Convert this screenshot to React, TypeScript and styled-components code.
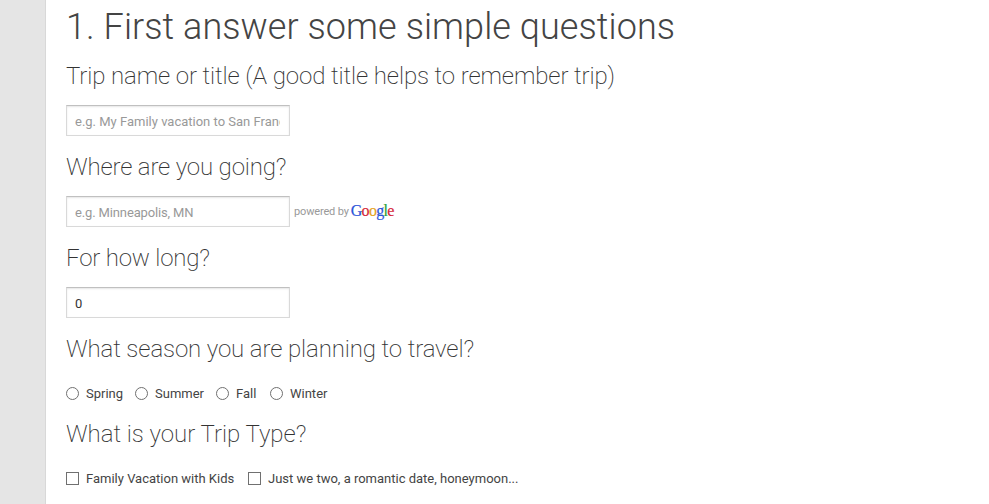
import React from "react";
import styled, { createGlobalStyle } from "styled-components";

const Global = createGlobalStyle`
  * { box-sizing: border-box; }
  body { margin: 0; background: #e5e5e5; overflow: hidden; font-family: Roboto, sans-serif; }
`;
const Page = styled.main`
  margin-left: 45px;
  height: 504px;
  padding: 4px 0 0 20px;
  background: #fff;
  border-left: 1px solid #d8d8d8;
  color: #444;
  overflow: hidden;
`;
const Title = styled.h1`
  margin: 0;
  height: 45px;
  font: 300 36px/46px Roboto, sans-serif;
  letter-spacing: 0.07px;
  white-space: nowrap;
`;
const Question = styled.section<{ $height: number }>`
  height: ${(p) => p.$height}px;
`;
const Heading = styled.h2<{ $tracking?: number }>`
  margin: 0;
  height: 56px;
  padding-top: 12px;
  font: 200 24px/30px Roboto, sans-serif;
  letter-spacing: ${(p) => p.$tracking ?? -0.12}px;
  color: #333;
  white-space: nowrap;
`;
const Row = styled.div`
  display: flex;
  align-items: center;
`;
const Field = styled.input<{ $tracking?: number }>`
  display: block;
  width: 224px;
  height: 31px;
  padding: 2px 8px 0;
  border: 1px solid #d9d9d9;
  border-top-color: #c0c0c0;
  box-shadow: inset 0 1px 2px rgba(0, 0, 0, 0.1);
  font: 13px Roboto, sans-serif;
  letter-spacing: ${(p) => p.$tracking ?? 0}px;
  color: #333;
  outline: 0;
  &::placeholder { color: #999; }
`;
const LongField = styled(Field)`
  padding-right: 9px;
`;
const Powered = styled.span`
  margin-left: 4px;
  font: 11px Roboto, sans-serif;
  letter-spacing: -0.15px;
  color: #999;
`;
const Wordmark = styled.span`
  margin: -2px 0 0 2px;
  font: 16px/20px "Liberation Serif", serif;
  letter-spacing: -0.72px;
`;
const Letter = styled.span<{ $color: string }>`
  display: inline-block;
  color: ${(p) => p.$color};
  -webkit-text-stroke: 0.2px ${(p) => p.$color};
`;
const Options = styled.div`
  display: flex;
  align-items: center;
  height: 18px;
  margin-top: 6px;
  padding-top: 1px;
`;
const Option = styled.label<{ $width: number }>`
  display: flex;
  align-items: center;
  flex: none;
  width: ${(p) => p.$width}px;
  font: 13px/16px Roboto, sans-serif;
  white-space: nowrap;
`;
const Choice = styled.input`
  appearance: none;
  flex: none;
  width: 13px;
  height: 13px;
  margin: 0 7px 0 0;
  border: 1px solid #707070;
  border-radius: ${(p) => (p.type === "radio" ? "50%" : "0")};
  background: #fff;
  &:checked { box-shadow: inset 0 0 0 2px #fff; background: #444; }
`;

const wordmark = [
  ["G", "#2b55d9"], ["o", "#d6263a"], ["o", "#e5a31e"],
  ["g", "#2b55d9"], ["l", "#25a03a"], ["e", "#d6263a"],
];
const seasons: [string, number][] = [["Spring", 69], ["Summer", 81], ["Fall", 54], ["Winter", 70]];
const tripTypes: [string, number][] = [
  ["Family Vacation with Kids", 182],
  ["Just we two, a romantic date, honeymoon...", 290],
];

export default function App() {
  return (
    <>
      <Global />
      <Page>
        <Title>1. First answer some simple questions</Title>
        <Question $height={91}>
          <Heading>Trip name or title (A good title helps to remember trip)</Heading>
          <LongField placeholder="e.g. My Family vacation to San Francisco" />
        </Question>
        <Question $height={91}>
          <Heading $tracking={-0.17}>Where are you going?</Heading>
          <Row>
            <Field $tracking={-0.14} placeholder="e.g. Minneapolis, MN" />
            <Powered>powered by</Powered>
            <Wordmark>
              {wordmark.map(([char, color], i) => <Letter key={i} $color={color}>{char}</Letter>)}
            </Wordmark>
          </Row>
        </Question>
        <Question $height={91}>
          <Heading $tracking={-0.2}>For how long?</Heading>
          <Field defaultValue="0" />
        </Question>
        <Question $height={85}>
          <Heading>What season you are planning to travel?</Heading>
          <Options>
            {seasons.map(([name, width]) => (
              <Option key={name} $width={width}><Choice type="radio" name="season" />{name}</Option>
            ))}
          </Options>
        </Question>
        <Question $height={85}>
          <Heading $tracking={-0.04}>What is your Trip Type?</Heading>
          <Options>
            {tripTypes.map(([name, width]) => (
              <Option key={name} $width={width}><Choice type="checkbox" />{name}</Option>
            ))}
          </Options>
        </Question>
      </Page>
    </>
  );
}
